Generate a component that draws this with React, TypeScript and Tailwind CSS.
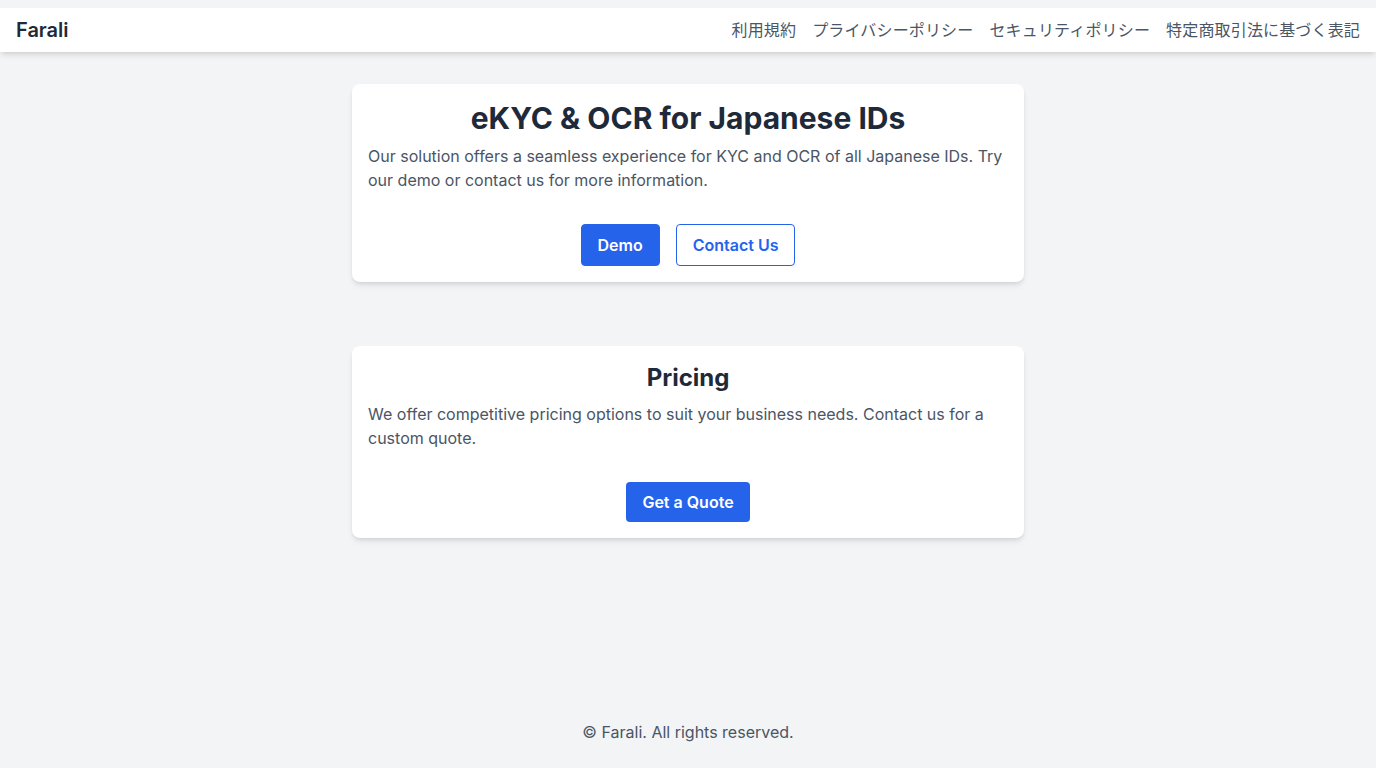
import React from 'react';

const navLinks = ['利用規約', 'プライバシーポリシー', 'セキュリティポリシー', '特定商取引法に基づく表記'];

const App = () => {
  return (
    <div
      className="min-h-screen flex flex-col bg-gray-100 pt-2"
      style={{ fontFamily: 'Inter, "Noto Sans CJK JP", sans-serif' }}
    >
      {/* Header */}
      <header className="bg-white shadow-md">
        <div className="flex justify-between items-center px-4 py-2">
          <div className="text-xl font-semibold text-gray-800">Farali</div>
          <nav className="flex space-x-4">
            {navLinks.map((link) => (
              <a key={link} href="#" className="text-gray-600 hover:text-gray-800 text-base tracking-[0.01em]">
                {link}
              </a>
            ))}
          </nav>
        </div>
      </header>

      {/* Main */}
      <main className="flex-1 pt-8">
        <section className="max-w-2xl mx-auto bg-white rounded-lg shadow-md p-4 mb-16">
          <h1 className="text-3xl font-bold text-gray-800 text-center mb-2">eKYC &amp; OCR for Japanese IDs</h1>
          <p className="text-gray-600 text-base mb-8">
            Our solution offers a seamless experience for KYC and OCR of all Japanese IDs. Try our demo or contact us for more information.
          </p>
          <div className="flex justify-center space-x-4">
            <a href="#" className="bg-[#2563eb] text-white font-semibold px-4 py-2 rounded border border-[#2563eb]">
              Demo
            </a>
            <a href="#" className="bg-white text-[#2563eb] font-semibold px-4 py-2 rounded border border-[#2563eb]">
              Contact Us
            </a>
          </div>
        </section>

        <section className="max-w-2xl mx-auto bg-white rounded-lg shadow-md p-4">
          <h2 className="text-2xl font-bold text-gray-800 text-center mb-2">Pricing</h2>
          <p className="text-gray-600 text-base mb-8">
            We offer competitive pricing options to suit your business needs. Contact us for a custom quote.
          </p>
          <div className="flex justify-center">
            <a href="#" className="bg-[#2563eb] text-white font-semibold px-4 py-2 rounded">
              Get a Quote
            </a>
          </div>
        </section>
      </main>

      {/* Footer */}
      <footer className="py-6 text-center text-gray-600">
        © Farali. All rights reserved.
      </footer>
    </div>
  );
};

export default App;
